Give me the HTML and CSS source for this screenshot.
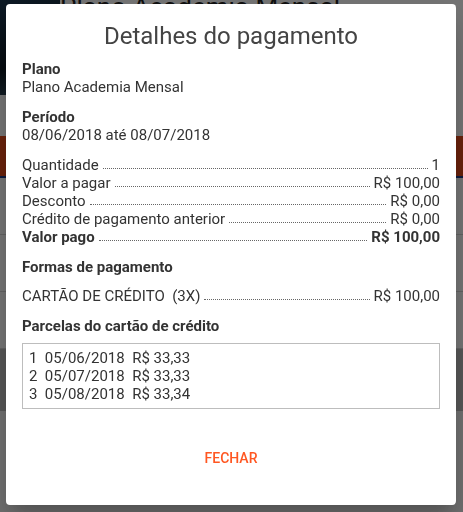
FILE: index.html
```html
<!DOCTYPE html>
<html lang="pt-BR">
<head>
  <meta charset="UTF-8">
  <meta name="viewport" content="width=device-width, initial-scale=1.0">
  <title>Detalhes do pagamento</title>
  <link rel="stylesheet" href="styles.css">
</head>
<body>
  <div class="page">
    <div class="hero">
      <div class="hero-img"></div>
      <h1 class="hero-title">Plano Academia Mensal</h1>
    </div>
    <div class="page-bar"></div>
    <div class="page-row"></div>
    <div class="page-row"></div>
    <div class="page-row"></div>
    <div class="page-footer"></div>
  </div>

  <div class="overlay">
    <div class="dialog">
      <h2 class="dialog-title">Detalhes do pagamento</h2>

      <div class="block">
        <div class="label">Plano</div>
        <div>Plano Academia Mensal</div>
      </div>

      <div class="block">
        <div class="label">Período</div>
        <div>08/06/2018 até 08/07/2018</div>
      </div>

      <div class="block">
        <div class="line"><span>Quantidade</span><span class="dots"></span><span>1</span></div>
        <div class="line"><span>Valor a pagar</span><span class="dots"></span><span>R$ 100,00</span></div>
        <div class="line"><span>Desconto</span><span class="dots"></span><span>R$ 0,00</span></div>
        <div class="line"><span>Crédito de pagamento anterior</span><span class="dots"></span><span>R$ 0,00</span></div>
        <div class="line total"><span>Valor pago</span><span class="dots"></span><span>R$ 100,00</span></div>
      </div>

      <div class="block">
        <div class="label">Formas de pagamento</div>
        <div class="line method"><span>CARTÃO DE CRÉDITO&nbsp; (3X)</span><span class="dots"></span><span>R$ 100,00</span></div>
      </div>

      <div class="block">
        <div class="label">Parcelas do cartão de crédito</div>
        <div class="parcelas">
          <div>1&nbsp; 05/06/2018&nbsp; R$ 33,33</div>
          <div>2&nbsp; 05/07/2018&nbsp; R$ 33,33</div>
          <div>3&nbsp; 05/08/2018&nbsp; R$ 33,34</div>
        </div>
      </div>

      <div class="actions">
        <button class="btn-close">Fechar</button>
      </div>
    </div>
  </div>
</body>
</html>
```

FILE: styles.css
```css
body {
  margin: 0;
  font-family: Roboto, "Noto Sans", sans-serif;
  background: #fff;
  color: #333;
  height: 512px;
  overflow: hidden;
}
.page {
  background: #f5f5f5;
  height: 512px;
}
.hero {
  display: flex;
  height: 136px;
  background: #fff;
}
.hero-img {
  width: 60px;
  height: 95px;
  background: linear-gradient(160deg, #1d3a52, #0d1822 60%, #3a5a70);
}
.hero-title {
  margin: -8px 0 0 0;
  font-size: 26px;
  font-weight: 400;
  color: #222;
}
.page-bar {
  height: 40px;
  background: #e64a19;
  border-bottom: 2px solid #1e3a8a;
}
.page-row {
  height: 56px;
  border-bottom: 1px solid #d6d6d6;
  background: #fff;
}
.page-row:last-of-type {
  height: 80px;
}
.page-footer {
  height: 62px;
  background: #bdbdbd;
}

/* camada escura e caixa de diálogo */
.overlay {
  position: fixed;
  inset: 0;
  background: rgba(0, 0, 0, 0.55);
  padding: 4px 7px 7px 6px;
}
.dialog {
  background: #fff;
  border-radius: 4px;
  height: 501px;
  box-sizing: border-box;
  padding: 18px 16px 0 16px;
  box-shadow: 0 11px 15px -7px rgba(0,0,0,0.2), 0 24px 38px 3px rgba(0,0,0,0.14);
  font-size: 15px;
  line-height: 18px;
  color: #333;
  display: flex;
  flex-direction: column;
}
.dialog-title {
  margin: 0 0 10px 0;
  text-align: center;
  font-size: 24px;
  font-weight: 400;
  line-height: 28px;
  color: #444;
}
.block {
  margin-bottom: 12px;
}
.label {
  font-weight: 700;
}
.line {
  display: flex;
  align-items: flex-end;
}
.dots {
  flex: 1;
  border-bottom: 1px dotted #666;
  margin: 0 4px 5px 4px;
}
.total {
  font-weight: 700;
}
.method {
  margin-top: 11px;
}
.parcelas {
  margin-top: 8px;
  border: 1px solid #bdbdbd;
  padding: 5px 6px;
}
.actions {
  display: flex;
  justify-content: center;
  margin-top: 21px;
}
.btn-close {
  background: none;
  border: none;
  font-family: inherit;
  font-size: 14px;
  font-weight: 500;
  text-transform: uppercase;
  color: #ff5722;
  padding: 8px 16px;
  cursor: pointer;
}
```
